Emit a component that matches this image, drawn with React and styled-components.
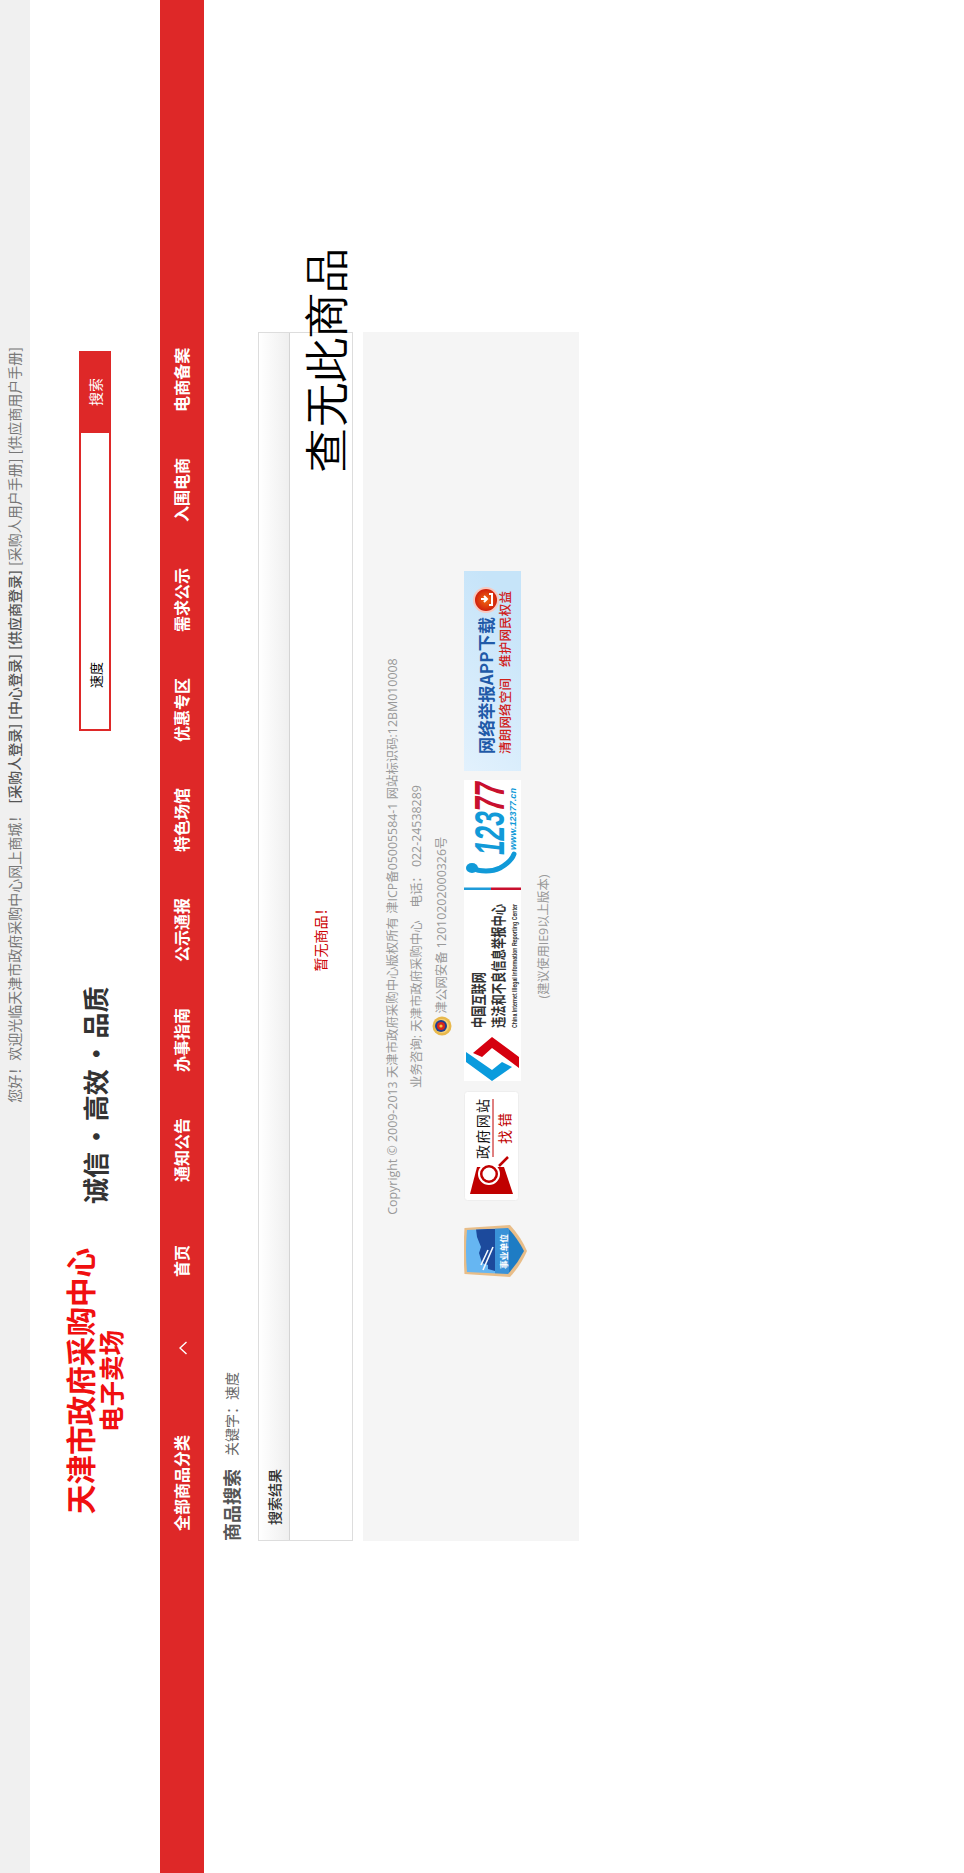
import React from "react"
import styled, { createGlobalStyle } from "styled-components"

const SANS = `"Open Sans", "Noto Sans CJK SC", sans-serif`
const CJK = `"Noto Sans CJK SC", sans-serif`
const RED = "#de2828"

const GlobalStyle = createGlobalStyle`
	body {
		margin: 0;
		padding: 0;
		background: #fff;
	}
`

const Frame = styled.div`
	width: 964px;
	height: 1873px;
	overflow: hidden;
`
// the whole page was photographed turned a quarter turn, so the sheet is laid out flat and turned once
const Sheet = styled.div`
	width: 1873px;
	height: 964px;
	background: #fff;
	font-family: ${SANS};
	transform-origin: 0 0;
	transform: rotate(-90deg) translateX(-100%);
`
const Container = styled.div`
	width: 1209px;
	margin: 0 auto;
`
const TopBar = styled.div`
	height: 30px;
	background: #f0f0f0;
`
const TopInner = styled(Container)`
	display: flex;
	justify-content: flex-end;
	align-items: center;
	height: 30px;
	padding: 0 15px 2px 0;
	box-sizing: border-box;
	font-size: 14px;
	color: #777;
	font-family: ${CJK};
	white-space: pre;
`
const TopLink = styled.a`
	color: ${(p) => (p.$strong ? "#555" : "#777")};
	font-weight: ${(p) => (p.$strong ? 500 : 400)};
	margin-left: ${(p) => p.$gap || 0}px;
`
const Header = styled(Container)`
	display: flex;
	height: 130px;
	align-items: flex-start;
	font-family: ${CJK};
`
const Logo = styled.div`
	width: 268px;
	margin: 33px 0 0 26px;
	text-align: center;
	color: #f01010;
	font-weight: 700;
`
const LogoTitle = styled.div`
	font-size: 29.6px;
	line-height: 34px;
`
const LogoSub = styled.div`
	font-size: 25.5px;
	line-height: 26px;
`
const Slogan = styled.div`
	margin: 48px 0 0 43px;
	font-size: 26px;
	line-height: 34px;
	font-weight: 700;
	color: #333;
	white-space: pre;
	word-spacing: -3.5px;
`
const SearchBox = styled.form`
	display: flex;
	width: 380px;
	height: 32px;
	margin: 49px 19px 0 auto;
`
const SearchInput = styled.input`
	flex: 1;
	min-width: 0;
	box-sizing: border-box;
	border: 2px solid ${RED};
	border-right: 0;
	padding: 0 0 0 41px;
	outline: none;
	font-size: 13px;
	color: #000;
	font-family: ${CJK};
`
const SearchButton = styled.button`
	width: 82px;
	border: 0;
	padding: 0;
	background: ${RED};
	color: #fff;
	font-size: 14px;
	font-family: ${CJK};
`
const NavBar = styled.div`
	height: 44px;
	background: ${RED};
`
const NavInner = styled(Container)`
	display: flex;
	align-items: center;
	height: 44px;
	padding: 0 0 2px 10px;
	box-sizing: border-box;
	font-family: ${CJK};
`
const CategoryCell = styled.div`
	display: flex;
	align-items: center;
	width: 254px;
`
const NavItem = styled.a`
	font-size: 16px;
	font-weight: 700;
	color: #fff;
	margin-right: ${(p) => p.$gap}px;
	white-space: nowrap;
`
const Chevron = styled.svg`
	margin: 3px 0 0 80px;
	display: block;
`
const Crumbs = styled(Container)`
	display: flex;
	align-items: flex-start;
	height: 54px;
	padding-top: 14px;
	box-sizing: border-box;
	font-family: ${CJK};
	color: #666;
`
const CrumbTitle = styled.div`
	font-size: 18px;
	line-height: 26px;
	font-weight: 700;
	color: #555;
	margin-right: 13px;
`
const CrumbText = styled.div`
	font-size: 14px;
	line-height: 26px;
`
const Panel = styled(Container)`
	position: relative;
	box-sizing: border-box;
	height: 95px;
	border: 1px solid #ddd;
	font-family: ${CJK};
`
const PanelHead = styled.div`
	height: 31px;
	box-sizing: border-box;
	padding-left: 15px;
	border-bottom: 1px solid #d4d4d4;
	background: linear-gradient(#fff, #efefef);
	font-size: 14px;
	line-height: 31px;
	font-weight: 500;
	color: #333;
`
const EmptyNote = styled.div`
	height: 62px;
	text-align: center;
	font-size: 14px;
	line-height: 60px;
	color: #c00;
`
const BigNotice = styled.div`
	position: absolute;
	left: 1068px;
	top: 41px;
	font-family: serif;
	font-size: 44px;
	line-height: 56px;
	letter-spacing: 1px;
	color: #000;
	white-space: nowrap;
`
const Footer = styled(Container)`
	margin-top: 10px;
	height: 216px;
	background: #f5f5f5;
	padding-top: 17.5px;
	box-sizing: border-box;
	text-align: center;
	font-size: 12.4px;
	line-height: 24.5px;
	color: #999;
`
const FootLine = styled.div`
	display: flex;
	justify-content: center;
	align-items: center;
	height: 24.5px;
	white-space: pre;
`
const Marks = styled.div`
	display: flex;
	justify-content: flex-start;
	align-items: flex-start;
	height: 63px;
	padding-left: 264px;
	margin-top: 10px;
`
const Mark = styled.svg`
	display: block;
	flex: none;
	margin-right: ${(p) => p.$gap || 0}px;
`
const BrowserNote = styled.div`
	margin-top: 5px;
`

const PoliceBadge = () => (
	<Mark width="20" height="20" viewBox="0 0 20 20" $gap={3}>
		<circle cx="10" cy="10" r="9.5" fill="#e8b84c" />
		<circle cx="10" cy="10" r="7" fill="#f4d27a" />
		<circle cx="10" cy="9" r="6" fill="#1f3f8f" />
		<circle cx="10" cy="9" r="4" fill="#d8261c" />
		<circle cx="10" cy="9" r="1.6" fill="#f3c644" />
	</Mark>
)

const UnitBadge = () => (
	<Mark width="52" height="63" viewBox="0 0 52 63" $gap={24}>
		<defs>
			<clipPath id="unitShield">
				<path d="M5 3 Q26 1 47 3 L49 44 Q38 54 26 60 Q14 54 3 44 Z" />
			</clipPath>
		</defs>
		<path d="M3 0.5 Q26 -1 49 0.5 L52 46 Q40 57 26 63 Q12 57 0 46 Z" fill="#e8bd88" />
		<g clipPath="url(#unitShield)">
			<rect width="52" height="31" fill="#66b6f2" />
			<rect y="31" width="52" height="14" fill="#3a92d8" />
			<rect y="45" width="52" height="18" fill="#1e7cc4" />
			<path d="M6 31 L8 24 L12 24 L14 18 L24 15 L30 17 L40 13 L48 12 L48 31 Z" fill="#1c4a9c" />
			<path d="M7 19 L30 29 M12 17 L27 24" fill="none" stroke="#f4f8fc" strokeWidth="1.6" />
		</g>
		<text x="8" y="43" fontSize="8.5" fontWeight="700" fill="#fff" fontFamily={CJK} textLength="35" lengthAdjust="spacingAndGlyphs">
			事业单位
		</text>
	</Mark>
)

const FindErrorMark = () => (
	<Mark width="110" height="55" viewBox="0 0 110 55" $gap={10}>
		<rect x="0.5" y="0.5" width="109" height="54" rx="3" fill="#fff" stroke="#eee" />
		<path d="M7 6 L34 13 L34 40 L7 49 Z" fill="#c00000" />
		<circle cx="27" cy="25" r="10" fill="#c00000" stroke="#fff" strokeWidth="2" />
		<circle cx="27" cy="25" r="6.5" fill="#fff" />
		<line x1="35" y1="35" x2="44" y2="44" stroke="#c00000" strokeWidth="2.5" />
		<text x="42" y="24" fontSize="14" fill="#111" fontFamily={CJK} textLength="60">
			政府网站
		</text>
		<line x1="44" y1="29" x2="102" y2="29" stroke="#c00000" strokeWidth="1" />
		<text x="57" y="46" fontSize="14" fill="#c00000" fontFamily={CJK} textLength="31">
			找错
		</text>
	</Mark>
)

const InternetMark = () => (
	<Mark width="191" height="57" viewBox="0 0 191 57">
		<rect width="191" height="57" fill="#fff" />
		<path d="M28 9 L44 28 L24 55 L13 55 L33 28 L24 18 Z" fill="#d5000f" />
		<path d="M29 2 L11 28 L19 38 L14 48 L0 28 L19 2 Z" fill="#0a9bdd" />
		<text x="53" y="20" fontSize="15" fontWeight="700" fill="#333" fontFamily={CJK} textLength="56" lengthAdjust="spacingAndGlyphs">
			中国互联网
		</text>
		<text x="53" y="40" fontSize="15" fontWeight="700" fill="#333" fontFamily={CJK} textLength="124" lengthAdjust="spacingAndGlyphs">
			违法和不良信息举报中心
		</text>
		<text x="53" y="53" fontSize="7" fontWeight="700" fill="#333" fontFamily="Liberation Sans" textLength="124" lengthAdjust="spacingAndGlyphs">
			China Internet Illegal Information Reporting Center
		</text>
	</Mark>
)

const HotlineMark = () => (
	<Mark width="110" height="57" viewBox="0 0 110 57" $gap={9}>
		<rect width="110" height="57" fill="#fff" />
		<rect width="2.5" height="27" fill="#1f9bd9" />
		<rect y="27" width="2.5" height="30" fill="#c8102e" />
		<ellipse cx="22" cy="8" rx="5" ry="6" fill="#119ad8" />
		<path d="M22 8 C18 16 18 28 22 36 C26 43 30 48 36 50" fill="none" stroke="#119ad8" strokeWidth="5" strokeLinecap="round" />
		<text x="35" y="40" fontSize="42" fontWeight="700" fontStyle="italic" fontFamily="Liberation Sans" textLength="73" lengthAdjust="spacingAndGlyphs">
			<tspan fill="#119ad8">123</tspan>
			<tspan fill="#c8102e">77</tspan>
		</text>
		<text x="40" y="52" fontSize="9" fontWeight="700" fontStyle="italic" fill="#119ad8" fontFamily="Liberation Sans" textLength="62" lengthAdjust="spacingAndGlyphs">
			www.12377.cn
		</text>
	</Mark>
)

const AppMark = () => (
	<Mark width="200" height="57" viewBox="0 0 200 57">
		<defs>
			<linearGradient id="appBg" x1="0" y1="0" x2="1" y2="0.3">
				<stop offset="0" stopColor="#e2f1fd" />
				<stop offset="1" stopColor="#c6e4f9" />
			</linearGradient>
			<radialGradient id="appDot">
				<stop offset="0" stopColor="#f26a10" />
				<stop offset="1" stopColor="#d0200c" />
			</radialGradient>
		</defs>
		<rect width="200" height="57" fill="url(#appBg)" />
		<text x="17" y="29" fontSize="17" fontWeight="700" fill="#1f5aa8" fontFamily={CJK} textLength="137">
			网络举报APP下载
		</text>
		<text x="17" y="46" fontSize="12.5" fontWeight="500" fill="#d0201a" fontFamily={CJK} textLength="76">
			清朗网络空间
		</text>
		<text x="104" y="46" fontSize="12.5" fontWeight="500" fill="#d0201a" fontFamily={CJK} textLength="76">
			维护网民权益
		</text>
		<circle cx="171" cy="22" r="13" fill="#f7c9c0" />
		<circle cx="171" cy="22" r="11" fill="url(#appDot)" />
		<path d="M166 21 H172 M169 18 L172 21 L169 24 M174 16 H177 V27 H174" transform="rotate(90 171 22)" fill="none" stroke="#fff" strokeWidth="2" />
	</Mark>
)

const App = () => {
	return (
		<Frame>
			<GlobalStyle />
			<Sheet>
				<TopBar>
					<TopInner>
						<span>您好！</span>
						<TopLink $gap={0}>欢迎光临天津市政府采购中心网上商城！</TopLink>
						<TopLink $gap={5} $strong>[采购人登录]</TopLink>
						<TopLink $gap={4} $strong>[中心登录]</TopLink>
						<TopLink $gap={4} $strong>[供应商登录]</TopLink>
						<TopLink $gap={4}>[采购人用户手册]</TopLink>
						<TopLink $gap={4}>[供应商用户手册]</TopLink>
					</TopInner>
				</TopBar>
				<Header>
					<Logo>
						<LogoTitle>天津市政府采购中心</LogoTitle>
						<LogoSub>电子卖场</LogoSub>
					</Logo>
					<Slogan>诚信 · 高效 · 品质</Slogan>
					<SearchBox>
						<SearchInput defaultValue="速度" />
						<SearchButton type="button">搜索</SearchButton>
					</SearchBox>
				</Header>
				<NavBar>
					<NavInner>
						<CategoryCell>
							<NavItem $gap={0}>全部商品分类</NavItem>
							<Chevron width="14" height="8" viewBox="0 0 14 8">
								<path d="M1 7.5 L7 1 L13 7.5" fill="none" stroke="#fff" strokeWidth="1.4" />
							</Chevron>
						</CategoryCell>
						<NavItem $gap={63}>首页</NavItem>
						<NavItem $gap={46}>通知公告</NavItem>
						<NavItem $gap={46}>办事指南</NavItem>
						<NavItem $gap={46}>公示通报</NavItem>
						<NavItem $gap={46}>特色场馆</NavItem>
						<NavItem $gap={46}>优惠专区</NavItem>
						<NavItem $gap={46}>需求公示</NavItem>
						<NavItem $gap={46}>入围电商</NavItem>
						<NavItem $gap={0}>电商备案</NavItem>
					</NavInner>
				</NavBar>
				<Crumbs>
					<CrumbTitle>商品搜索</CrumbTitle>
					<CrumbText>关键字：速度</CrumbText>
				</Crumbs>
				<Panel>
					<PanelHead>搜索结果</PanelHead>
					<EmptyNote>暂无商品！</EmptyNote>
					<BigNotice>查无此商品</BigNotice>
				</Panel>
				<Footer>
					<FootLine>Copyright © 2009-2013 天津市政府采购中心版权所有 津ICP备05005584-1 网站标识码:12BM010008</FootLine>
					<FootLine>业务咨询: 天津市政府采购中心    电话： 022-24538289</FootLine>
					<FootLine>
						<PoliceBadge />
						津公网安备 12010202000326号
					</FootLine>
					<Marks>
						<UnitBadge />
						<FindErrorMark />
						<InternetMark />
						<HotlineMark />
						<AppMark />
					</Marks>
					<BrowserNote>(建议使用IE9以上版本)</BrowserNote>
				</Footer>
			</Sheet>
		</Frame>
	)
}

export default App
